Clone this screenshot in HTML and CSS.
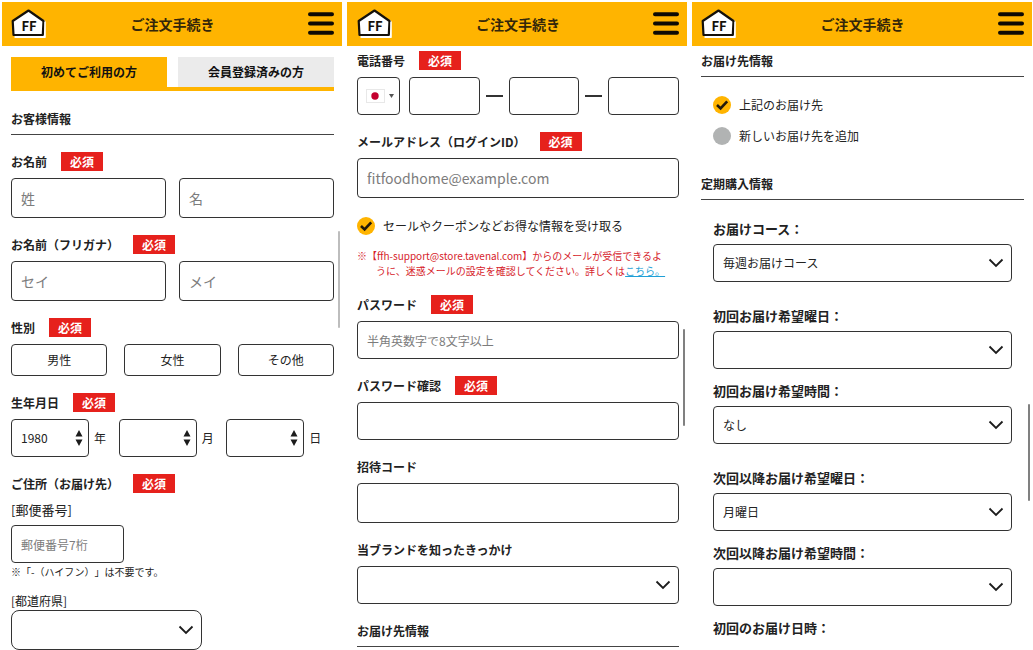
FILE: index.html
```html
<!DOCTYPE html>
<html lang="ja">
<head>
<meta charset="utf-8">
<meta name="viewport" content="width=device-width, initial-scale=1">
<title>ご注文手続き</title>
<link rel="stylesheet" href="styles.css">
</head>
<body>
<svg class="sprite" width="0" height="0" aria-hidden="true">
  <symbol id="logo" viewBox="0 0 36 32">
    <path d="M4.500 12.500 19 4.500 34.500 13V30H3.500Z" fill="#fff"/>
    <path d="M17.500 2.500 32.500 13 31.800 27H2.500L1.700 13Z" fill="#fff" stroke="#15110a" stroke-width="2.200" stroke-linejoin="round"/>
    <path d="M4 28.800H34V14" fill="none" stroke="#fff" stroke-width="1.200"/>
  </symbol>
  <symbol id="menu" viewBox="0 0 26 24">
    <path d="M2 2.200H24M2 11.500H24M2 20.800H24" stroke="#0d0a05" stroke-width="4" stroke-linecap="round"/>
  </symbol>
  <symbol id="chevron" viewBox="0 0 16 10">
    <path d="M1.500 1.500 8 8 14.500 1.500" fill="none" stroke="#1c1c1c" stroke-width="1.800"/>
  </symbol>
  <symbol id="updown" viewBox="0 0 8 16">
    <path d="M4 0 7.500 6.500H.5ZM4 16 7.500 9.500H.5Z" fill="#1c1c1c"/>
  </symbol>
  <symbol id="check" viewBox="0 0 18 18">
    <path d="M4 9 7.600 12.500 14.200 5.300" fill="none" stroke="#22190a" stroke-width="2.600"/>
  </symbol>
</svg>
<main class="board">

  <section class="phone">
    <header class="bar">
      <a class="logo" href="#" aria-label="ホーム"><svg aria-hidden="true"><use href="#logo"/></svg><span>FF</span></a>
      <h1 class="bar-title">ご注文手続き</h1>
      <button class="menu" type="button" aria-label="メニュー"><svg aria-hidden="true"><use href="#menu"/></svg></button>
    </header>
    <form class="content content-first">
      <div class="tabs">
        <button class="tab tab-active" type="button">初めてご利用の方</button>
        <button class="tab" type="button">会員登録済みの方</button>
      </div>
      <h2 class="section-title">お客様情報</h2>
      <div class="fields">
        <div class="field">
          <div class="label-row"><label for="sei">お名前</label><span class="badge">必須</span></div>
          <div class="pair">
            <input class="control tall" id="sei" type="text" placeholder="姓">
            <input class="control tall" type="text" placeholder="名" aria-label="名">
          </div>
        </div>
        <div class="field">
          <div class="label-row"><label for="sei-kana">お名前（フリガナ）</label><span class="badge">必須</span></div>
          <div class="pair">
            <input class="control tall" id="sei-kana" type="text" placeholder="セイ">
            <input class="control tall" type="text" placeholder="メイ" aria-label="メイ">
          </div>
        </div>
        <div class="field">
          <div class="label-row"><span>性別</span><span class="badge">必須</span></div>
          <div class="choices">
            <button class="choice" type="button">男性</button>
            <button class="choice" type="button">女性</button>
            <button class="choice" type="button">その他</button>
          </div>
        </div>
        <div class="field">
          <div class="label-row"><label for="year">生年月日</label><span class="badge">必須</span></div>
          <div class="birth">
            <div class="unit"><div class="picker"><select class="control" id="year"><option>1980</option></select><svg class="updown" aria-hidden="true"><use href="#updown"/></svg></div><label for="year">年</label></div>
            <div class="unit"><div class="picker"><select class="control" id="month"><option></option></select><svg class="updown" aria-hidden="true"><use href="#updown"/></svg></div><label for="month">月</label></div>
            <div class="unit"><div class="picker"><select class="control" id="day"><option></option></select><svg class="updown" aria-hidden="true"><use href="#updown"/></svg></div><label for="day">日</label></div>
          </div>
        </div>
        <div class="address">
          <div class="label-row"><span>ご住所（お届け先）</span><span class="badge">必須</span></div>
          <label class="sub-label sub-zip" for="zip">[郵便番号]</label>
          <input class="control zip" id="zip" type="text" placeholder="郵便番号7桁">
          <p class="hint">※「-（ハイフン）」は不要です。</p>
          <label class="sub-label" for="pref">[都道府県]</label>
          <div class="picker pref"><select class="control tall" id="pref"><option></option></select><svg class="chevron" aria-hidden="true"><use href="#chevron"/></svg></div>
        </div>
      </div>
    </form>
    <div class="thumb thumb-first"></div>
  </section>

  <section class="phone">
    <header class="bar bar-second">
      <a class="logo" href="#" aria-label="ホーム"><svg aria-hidden="true"><use href="#logo"/></svg><span>FF</span></a>
      <h1 class="bar-title">ご注文手続き</h1>
      <button class="menu" type="button" aria-label="メニュー"><svg aria-hidden="true"><use href="#menu"/></svg></button>
    </header>
    <form class="content content-second">
      <div class="fields">
        <div class="field">
          <div class="label-row"><label for="tel">電話番号</label><span class="badge">必須</span></div>
          <div class="tel">
            <div class="picker country">
              <select class="control" aria-label="国"><option></option></select>
              <svg class="flag" viewBox="0 0 28 14" aria-hidden="true"><rect x=".5" y=".5" width="18" height="13" fill="#fff" stroke="#e8e8e8"/><circle cx="9" cy="7" r="3.700" fill="#c4002f"/><path d="M23 5H28L25.500 9Z" fill="#555"/></svg>
            </div>
            <input class="control" id="tel" type="tel">
            <span class="dash"></span>
            <input class="control" type="tel" aria-label="電話番号 2">
            <span class="dash"></span>
            <input class="control" type="tel" aria-label="電話番号 3">
          </div>
        </div>
        <div class="field">
          <div class="label-row"><label for="mail">メールアドレス（ログインID）</label><span class="badge">必須</span></div>
          <input class="control tall" id="mail" type="email" placeholder="fitfoodhome@example.com">
        </div>
        <div class="news">
          <label class="option"><span class="mark"><input type="checkbox" checked><svg aria-hidden="true"><use href="#check"/></svg></span>セールやクーポンなどお得な情報を受け取る</label>
          <p class="notice">※【ffh-support@store.tavenal.com】からのメールが受信できるよ<br>うに、迷惑メールの設定を確認してください。詳しくは<a href="#">こちら。</a></p>
        </div>
        <div class="field">
          <div class="label-row"><label for="pass">パスワード</label><span class="badge">必須</span></div>
          <input class="control" id="pass" type="password" placeholder="半角英数字で8文字以上">
        </div>
        <div class="field">
          <div class="label-row"><label for="pass2">パスワード確認</label><span class="badge">必須</span></div>
          <input class="control" id="pass2" type="password">
        </div>
        <div class="field">
          <div class="label-row"><label for="invite">招待コード</label></div>
          <input class="control tall" id="invite" type="text">
        </div>
        <div class="field">
          <div class="label-row"><label for="source">当ブランドを知ったきっかけ</label></div>
          <div class="picker"><select class="control" id="source"><option></option></select><svg class="chevron" aria-hidden="true"><use href="#chevron"/></svg></div>
        </div>
        <h2 class="section-title">お届け先情報</h2>
      </div>
    </form>
    <div class="thumb thumb-second"></div>
  </section>

  <section class="phone">
    <header class="bar">
      <a class="logo" href="#" aria-label="ホーム"><svg aria-hidden="true"><use href="#logo"/></svg><span>FF</span></a>
      <h1 class="bar-title">ご注文手続き</h1>
      <button class="menu" type="button" aria-label="メニュー"><svg aria-hidden="true"><use href="#menu"/></svg></button>
    </header>
    <form class="content">
      <h2 class="section-title">お届け先情報</h2>
      <div class="options">
        <label class="option"><span class="mark"><input type="radio" name="dest" checked><svg aria-hidden="true"><use href="#check"/></svg></span>上記のお届け先</label>
        <label class="option"><span class="mark"><input type="radio" name="dest"></span>新しいお届け先を追加</label>
      </div>
      <h2 class="section-title">定期購入情報</h2>
      <div class="plan">
        <div class="plan-group">
          <div class="plan-field"><label for="course">お届けコース：</label>
            <div class="picker"><select class="control" id="course"><option>毎週お届けコース</option></select><svg class="chevron" aria-hidden="true"><use href="#chevron"/></svg></div></div>
        </div>
        <div class="plan-group">
          <div class="plan-field"><label for="first-day">初回お届け希望曜日：</label>
            <div class="picker"><select class="control" id="first-day"><option></option></select><svg class="chevron" aria-hidden="true"><use href="#chevron"/></svg></div></div>
          <div class="plan-field"><label for="first-time">初回お届け希望時間：</label>
            <div class="picker"><select class="control" id="first-time"><option>なし</option></select><svg class="chevron" aria-hidden="true"><use href="#chevron"/></svg></div></div>
        </div>
        <div class="plan-group">
          <div class="plan-field"><label for="next-day">次回以降お届け希望曜日：</label>
            <div class="picker"><select class="control" id="next-day"><option>月曜日</option></select><svg class="chevron" aria-hidden="true"><use href="#chevron"/></svg></div></div>
          <div class="plan-field"><label for="next-time">次回以降お届け希望時間：</label>
            <div class="picker"><select class="control" id="next-time"><option></option></select><svg class="chevron" aria-hidden="true"><use href="#chevron"/></svg></div></div>
          <p class="plan-label">初回のお届け日時：</p>
        </div>
      </div>
    </form>
    <div class="thumb thumb-third"></div>
  </section>

</main>
</body>
</html>
```

FILE: styles.css
```css
* { box-sizing: border-box; }

body, h1, h2, p { margin: 0; }

body {
  background: #fff;
  color: #222;
  font-family: "Noto Sans CJK JP", sans-serif;
  font-size: 12px;
  line-height: 20px;
  text-spacing-trim: space-all;
}

.sprite { position: absolute; }

button, input, select {
  font: inherit;
  color: inherit;
  margin: 0;
}

.board {
  display: grid;
  grid-template-columns: repeat(3, minmax(0, 1fr));
  gap: 5px;
  height: 100vh;
  padding: 2px 1px 0 2px;
  overflow: hidden;
}

.phone { position: relative; min-width: 0; }

/* Header */
.bar {
  display: grid;
  grid-template-columns: 1fr auto 1fr;
  align-items: center;
  height: 44px;
  padding: 0 8px 0 9px;
  background: #ffb400;
}

.logo {
  display: grid;
  place-items: center;
  width: 36px;
  color: #15110a;
  font-size: 13px;
  font-weight: 700;
  line-height: 16px;
  text-decoration: none;
}

.logo svg, .logo span { grid-area: 1 / 1; }
.logo svg { width: 36px; height: 32px; }
.logo span { padding-top: 3px; }

.bar-title {
  color: #33260a;
  font-size: 14px;
  font-weight: 700;
  line-height: 20px;
}

.menu {
  display: flex;
  justify-self: end;
  padding: 0;
  border: 0;
  background: none;
}

.menu svg { width: 26px; height: 24px; }

/* Page body */
.content { padding: 5px 8px 0 9px; }
.content-first { padding-top: 11px; }
.content-second { padding-left: 10px; }
.bar-second { padding-left: 10px; }

.tabs {
  display: grid;
  grid-template-columns: 1fr 1fr;
  gap: 11px;
  margin-bottom: 18px;
  border-bottom: 4px solid #ffb400;
}

.tab {
  height: 30px;
  padding: 0;
  border: 0;
  background: #ebebeb;
  color: #111;
  font-weight: 700;
}

.tab-active { background: #ffb400; }

.section-title {
  padding-bottom: 5px;
  border-bottom: 1px solid #444;
  font-size: 12px;
  font-weight: 700;
}

.fields { display: grid; gap: 17px; }
.section-title + .fields { padding-top: 17px; }

.field { display: grid; gap: 7px; }

.label-row {
  display: flex;
  align-items: center;
  gap: 14px;
  height: 19px;
  font-weight: 700;
}

.badge {
  width: 42px;
  background: #e6211c;
  color: #fff;
  line-height: 19px;
  text-align: center;
}

.control {
  width: 100%;
  min-width: 0;
  height: 38px;
  padding: 0 9px;
  border: 1px solid #333;
  border-radius: 4px;
  background: #fff;
  appearance: none;
}

.tall { height: 40px; font-size: 14px; }
.control::placeholder { color: #7c7c7c; opacity: 1; }

.picker { display: grid; align-items: center; }
.picker > * { grid-area: 1 / 1; }
.picker svg { justify-self: end; pointer-events: none; }
.chevron { width: 16px; height: 10px; margin-right: 8px; }
.updown { width: 8px; height: 16px; margin-right: 6px; }

.pair {
  display: grid;
  grid-template-columns: 1fr 1fr;
  gap: 13px;
}

.choices {
  display: grid;
  grid-template-columns: repeat(3, 1fr);
  gap: 17px;
}

.choice {
  height: 32px;
  padding: 0;
  border: 1px solid #333;
  border-radius: 4px;
  background: #fff;
}

.birth {
  display: grid;
  grid-template-columns: repeat(3, 1fr);
}

.unit {
  display: grid;
  grid-template-columns: 78px auto;
  justify-content: start;
  align-items: center;
  gap: 5px;
}

.address { display: flex; flex-direction: column; align-items: flex-start; }
.sub-label { line-height: 18px; }
.sub-zip { margin: 8px 0 6px; font-size: 13px; }
.zip { width: 35%; }
.hint { margin: 1px 0 12px; font-size: 10px; line-height: 16px; }
.pref { width: 59%; }
.pref .control { border-radius: 8px; }

.tel {
  display: grid;
  grid-template-columns: 52px 1fr auto 1fr auto 1fr;
  align-items: center;
}

.country { width: 43px; }
.picker .flag { width: 28px; height: 14px; margin-right: 6px; }
.dash { width: 17px; height: 2px; margin: 0 6px; background: #333; }

/* Tick boxes and radios */
.option {
  display: flex;
  align-items: center;
  gap: 8px;
  line-height: 18px;
}

.mark { display: grid; width: 18px; height: 18px; }
.mark > * { grid-area: 1 / 1; width: 18px; height: 18px; }
.mark svg { pointer-events: none; }

.mark input {
  border-radius: 50%;
  background: #b1b3b3;
  appearance: none;
}

.mark input:checked { background: #ffb400; }

.news { display: grid; gap: 13px; padding-top: 2px; }

.notice {
  padding-left: 19px;
  color: #d6232b;
  font-size: 10px;
  line-height: 15px;
  text-indent: -19px;
}

.notice a { color: #1f9fd6; }

.options { display: grid; gap: 13px; padding: 19px 12px 29px; }

.plan { display: grid; gap: 24px; padding: 19px 12px 0; }
.plan-group { display: grid; gap: 12px; }
.plan-field { display: grid; gap: 6px; }

.plan-field label, .plan-label {
  font-size: 13px;
  font-weight: 700;
  line-height: 19px;
}

/* Scroll indicators */
.thumb {
  position: absolute;
  right: 2px;
  width: 2px;
  height: 97px;
  border-radius: 1px;
  background: #808080;
}

.thumb-first { top: 229px; background: #bdbdbd; }
.thumb-second { top: 327px; }
.thumb-third { top: 402px; }
```
